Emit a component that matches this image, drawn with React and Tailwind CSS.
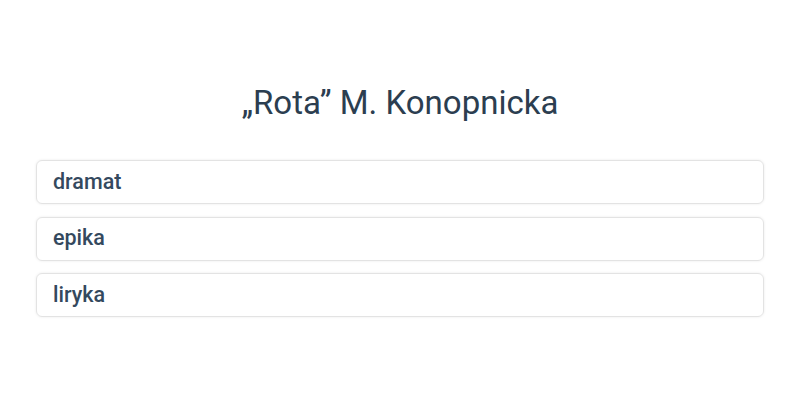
const ITEMS = ["dramat", "epika", "liryka"];

export default function App() {
  return (
    <div className="min-h-[400px] bg-white text-[#2c3e50] font-['Roboto',sans-serif]">
      <div className="px-9 pt-[80px]">
        <h1 className="text-center text-[33px] leading-[46px] font-normal">„Rota” M. Konopnicka</h1>
        <ul className="mt-[34px] flex flex-col gap-[12.5px]">
          {ITEMS.map((item) => (
            <li
              key={item}
              className="h-11 flex items-center px-4 rounded-md border border-[#e3e3e3] shadow-[0_0_3px_rgba(0,0,0,0.08)] text-[21.5px] font-medium text-[#34495e]"
            >
              {item}
            </li>
          ))}
        </ul>
      </div>
    </div>
  );
}
